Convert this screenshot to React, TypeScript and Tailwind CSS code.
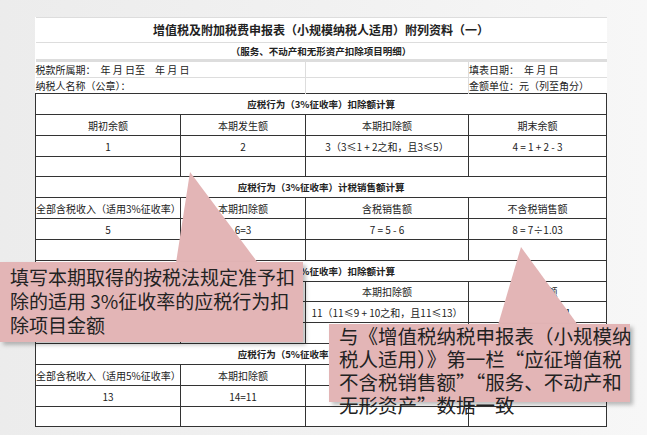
const F = { fontFamily: '"Noto Sans CJK SC", "Noto Sans", sans-serif' };

function Sec({ t }: { t: string }) {
  return (
    <tr className="h-[21px]">
      <td colSpan={4} className="border border-[#333] text-center font-bold text-[9.5px]">{t}</td>
    </tr>
  );
}
function Row({ c, h = "h-[21px]" }: { c: string[]; h?: string }) {
  return (
    <tr className={h}>
      {c.map((x, i) => (
        <td key={i} className="border border-[#333] text-center text-[10px] text-[#222] whitespace-nowrap">{x}</td>
      ))}
    </tr>
  );
}

export default function App() {
  return (
    <div style={F} className="relative w-[647px] h-[435px] overflow-hidden bg-gradient-to-r from-[#ececec] via-[#f1f1f1] to-[#f7f7f7]">
      <div className="pt-[17px] pl-[35px]">
        <table className="border-collapse bg-white table-fixed w-[571px] text-[#222]">
          <colgroup>
            <col className="w-[145px]" /><col className="w-[125px]" /><col className="w-[163px]" /><col className="w-[138px]" />
          </colgroup>
          <tbody>
            <tr className="h-[25px]">
              <td colSpan={4} className="text-center font-bold text-[12px] border-t border-[#ddd]">增值税及附加税费申报表（小规模纳税人适用）附列资料（一）</td>
            </tr>
            <tr className="h-[18px]">
              <td colSpan={4} className="text-center font-bold text-[9.5px] border-t border-[#ddd]">（服务、不动产和无形资产扣除项目明细）</td>
            </tr>
            <tr className="h-[17px] text-[10px] border-t-[3px] border-[#ddd]">
              <td colSpan={2} className="whitespace-nowrap">税款所属期：　年 月 日至　年 月 日</td>
              <td className="border-l border-[#ddd]"></td>
              <td className="border-l border-[#ddd]">填表日期：　年 月 日</td>
            </tr>
            <tr className="h-[15px] text-[10px] border-t border-[#ddd]">
              <td colSpan={2}>纳税人名称（公章）：</td>
              <td className="border-l border-[#ddd]"></td>
              <td className="border-l border-[#ddd] whitespace-nowrap">金额单位：元（列至角分）</td>
            </tr>
            <Sec t="应税行为（3%征收率）扣除额计算" />
            <Row c={["期初余额", "本期发生额", "本期扣除额", "期末余额"]} />
            <Row c={["1", "2", "3（3≤1 + 2之和，且3≤5）", "4 = 1 + 2 - 3"]} />
            <Row c={["", "", "", ""]} h="h-[20px]" />
            <Sec t="应税行为（3%征收率）计税销售额计算" />
            <Row c={["全部含税收入（适用3%征收率）", "本期扣除额", "含税销售额", "不含税销售额"]} />
            <Row c={["5", "6=3", "7 = 5 - 6", "8 = 7÷1.03"]} />
            <Row c={["", "", "", ""]} />
            <Sec t="应税行为（5%征收率）扣除额计算" />
            <Row c={["期初余额", "本期发生额", "本期扣除额", "期末余额"]} h="h-[20px]" />
            <Row c={["9", "10", "11（11≤9 + 10之和，且11≤13）", "12 = 9 + 10 - 11"]} />
            <Row c={["", "", "", ""]} />
            <Sec t="应税行为（5%征收率）计税销售额计算" />
            <Row c={["全部含税收入（适用5%征收率）", "本期扣除额", "含税销售额", "不含税销售额"]} />
            <Row c={["13", "14=11", "15 = 13 - 14", "16 = 15÷1.05"]} />
            <Row c={["", "", "", ""]} h="h-[20px]" />
          </tbody>
        </table>
      </div>

      <svg className="absolute left-0 top-0" width="647" height="435">
        <polygon points="176,263 190,172 258,263" fill="#e3b5b6" />
        <polygon points="498,325 521,247 578,325" fill="#e3b5b6" />
      </svg>
      <div className="absolute left-0 top-[262px] w-[303px] h-[80px] bg-[#e3b5b6] shadow-[3px_3px_4px_rgba(0,0,0,0.25)] pl-[10px] pt-[3px] text-[19px] leading-[24px] text-[#222]">
        填写本期取得的按税法规定准予扣<br />除的适用 3%征收率的应税行为扣<br />除项目金额
      </div>
      <div className="absolute left-[329px] top-[324px] w-[301px] h-[78px] bg-[#e3b5b6] shadow-[3px_3px_4px_rgba(0,0,0,0.25)] pl-[10px] pt-0 text-[19.5px] leading-[23px] text-[#222] whitespace-nowrap">
        与《增值税纳税申报表（小规模纳<br />税人适用）》第一栏“应征增值税<br />不含税销售额”“服务、不动产和<br />无形资产”数据一致
      </div>
    </div>
  );
}
